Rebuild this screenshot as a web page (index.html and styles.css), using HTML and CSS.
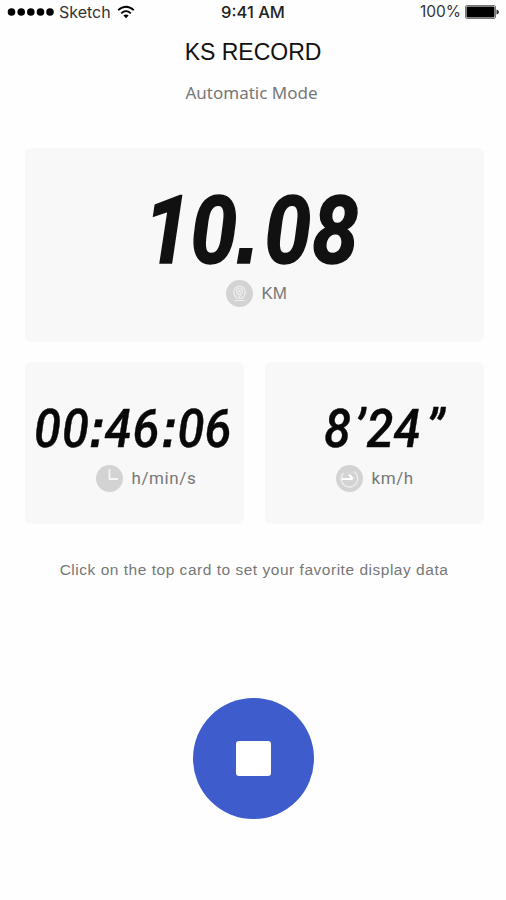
FILE: index.html
```html
<!DOCTYPE html>
<html lang="en">
<head>
<meta charset="utf-8">
<title>KS Record</title>
<link rel="stylesheet" href="styles.css">
</head>
<body>
<div class="status">
  <div class="carrier">
    <svg width="48" height="8" viewBox="0 0 48 8"><circle cx="4.500" cy="4" r="3.800"/><circle cx="14.200" cy="4" r="3.800"/><circle cx="23.800" cy="4" r="3.800"/><circle cx="33.500" cy="4" r="3.800"/><circle cx="43" cy="4" r="3.800"/></svg>
    <span class="network">Sketch</span>
    <svg class="wifi" width="18" height="14" viewBox="0 0 18 14"><path d="M1.200 5.200Q9-1.800 16.800 5.200M4.200 8.300Q9 4 13.800 8.300" fill="none" stroke="#000" stroke-width="1.800"/><path d="M6.400 10.600Q9 8.400 11.600 10.600L9 13.200Z"/></svg>
  </div>
  <span class="clock">9:41 AM</span>
  <div class="power"><span>100%</span>
    <svg width="34" height="14" viewBox="0 0 34 14"><rect x=".5" y=".5" width="30" height="13" rx="1.500" fill="#fff" stroke="#777"/><rect x="1.500" y="1.500" width="28" height="11" rx="1"/><path d="M31.500 4.500q2.500.5 2.500 2.500t-2.500 2.500z" fill="#333"/></svg>
  </div>
</div>
<h1 class="title">KS RECORD</h1>
<p class="mode">Automatic Mode</p>
<main class="cards">
  <section class="card wide">
    <svg class="value large" width="459" height="80" viewBox="25 187 459 80"><text transform="scale(.88 1)" x="190 243 281 327 381" y="263">10<tspan class="dot">.</tspan>08</text></svg>
    <div class="unit">
      <svg width="27" height="27" viewBox="0 0 27 27"><circle cx="13.500" cy="13.500" r="13.500" fill="#d3d3d3"/><g fill="none" stroke="#f0f0f0" stroke-width="1.100"><path d="M11 18.200c-2.500-2-3.200-4-3.200-6.500a5.700 5.700 0 0 1 11.400 0c0 2.500-.7 4.500-3.200 6.500Z"/><circle cx="13.500" cy="11" r="3"/><circle cx="13.500" cy="11" r=".8"/><path d="M11.800 14.500l1.700 2.500 1.700-2.500M8.500 20.500h10"/></g></svg>
      <span class="km">KM</span>
    </div>
  </section>
  <section class="card">
    <svg class="value" width="219" height="50" viewBox="25 402 219 50"><text transform="scale(.92 1)" x="51.600 82 105.400 128.300 158.700 183.700 207.600 237" y="447">00<tspan class="dot">:</tspan>46<tspan class="dot">:</tspan>06</text></svg>
    <div class="unit time">
      <svg width="27" height="27" viewBox="0 0 27 27"><circle cx="13.500" cy="13.500" r="13.500" fill="#d3d3d3"/><path d="M13.500 4v10H22" fill="none" stroke="#f5f5f5" stroke-width="1.800"/></svg>
      <span class="hms">h/min/s</span>
    </div>
  </section>
  <section class="card">
    <svg class="value" width="219" height="50" viewBox="265 402 219 50"><text transform="scale(.92 1)" x="366.800 391 413 442.400 473" y="447">8’24”</text></svg>
    <div class="unit speed">
      <svg width="27" height="27" viewBox="0 0 27 27"><circle cx="13.500" cy="13.500" r="13.500" fill="#d3d3d3"/><path d="M7.500 8a8.300 8.300 0 1 0 10-1.500" fill="none" stroke="#eee" stroke-width="1.400"/><path d="M6 14h10.500M13 9.800l4 4" fill="none" stroke="#fff" stroke-width="2"/></svg>
      <span class="kmh">km/h</span>
    </div>
  </section>
</main>
<p class="hint">Click on the top card to set your favorite display data</p>
<button class="stop" aria-label="Stop"><span class="square"></span></button>
</body>
</html>
```
FILE: styles.css
```css
* { box-sizing: border-box; }
body {
  margin: 0;
  height: 900px;
  display: flex;
  flex-direction: column;
  align-items: center;
  background: #fefefe;
  color: #111;
  font-family: "Liberation Sans", Arial, sans-serif;
  overflow: hidden;
}
svg { display: block; flex: none; overflow: visible; }
.status {
  width: 100%;
  height: 24px;
  padding: 0 7px;
  display: grid;
  grid-template-columns: 1fr auto 1fr;
  align-items: center;
  font: 16px/24px Inter, sans-serif;
}
.carrier, .power { display: flex; align-items: center; }
.network { margin: 0 6px 0 4px; color: #333; }
.clock { font-size: 16.5px; font-weight: 500; color: #222; }
.power { justify-content: flex-end; gap: 4px; color: #333; font-size: 15.5px; }
.title {
  margin: 14px 0 0;
  font-size: 23px;
  font-weight: 400;
  line-height: 28px;
}
.mode {
  margin: 14px 0 0 -3px;
  font: 17px/26px "Noto Sans", sans-serif;
  color: #777;
}
.cards {
  margin: 42px 0 0 2px;
  width: 459px;
  display: grid;
  grid-template-columns: 219px 219px;
  grid-template-rows: 194px 162px;
  gap: 20px 21px;
}
.card { background: #f8f8f8; border-radius: 6px; padding-top: 40px; }
.wide { grid-column: 1 / -1; padding-top: 39px; }
.value {
  font: italic 500 53px Roboto, sans-serif;
  text-anchor: middle;
  fill: #080808;
  stroke: #080808;
  stroke-width: .4px;
}
.large { font-size: 95px; font-weight: 700; fill: #111; stroke: #111; stroke-width: 1.6px; }
.dot { font-family: "Liberation Sans", sans-serif; font-weight: 700; }
.unit {
  display: flex;
  align-items: center;
  gap: 9px;
  margin: 13px 0 0 201px;
  color: #777;
  font-size: 17px;
  line-height: 27px;
}
.time, .speed { margin-left: 71px; }
.hms, .kmh { font-family: Roboto, sans-serif; letter-spacing: .6px; }
.hint {
  margin: 35px 0 0 2px;
  font-size: 15.5px;
  letter-spacing: .52px;
  line-height: 22px;
  color: #777;
  white-space: nowrap;
}
.stop {
  margin: 117px 0 0 1px;
  width: 121px;
  height: 121px;
  border: 0;
  padding: 0;
  border-radius: 50%;
  background: #3e5ccb;
  display: flex;
  align-items: center;
  justify-content: center;
}
.square { width: 35px; height: 35px; border-radius: 3px; background: #fff; }
```
